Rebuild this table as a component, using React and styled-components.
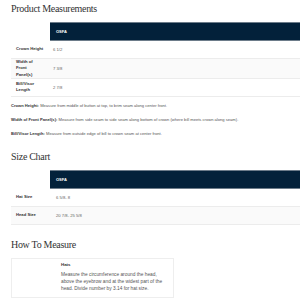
import React from 'react';
import styled, { createGlobalStyle } from 'styled-components';

const measurements = [
    { label: 'Crown Height', value: '6 1/2' },
    { label: 'Width of Front Panel(s)', value: '7 3/8' },
    { label: 'Bill/Visor Length', value: '2 7/8' },
];

const sizes = [
    { label: 'Hat Size', value: '6 5/8- 8' },
    { label: 'Head Size', value: '20 7/8- 25 5/8' },
];

const notes = [
    { term: 'Crown Height', text: 'Measure from middle of button at top, to brim seam along center front.' },
    { term: 'Width of Front Panel(s)', text: 'Measure from side seam to side seam along bottom of crown (where bill meets crown along seam).' },
    { term: 'Bill/Visor Length', text: 'Measure from outside edge of bill to crown seam at center front.' },
];

const App = () => {
    return (
        <>
            <GlobalStyle />
            <Page>
                <Heading>Product Measurements</Heading>
                <Table>
                    <thead>
                        <tr>
                            <BlankHeader />
                            <TableHeader>OSFA</TableHeader>
                        </tr>
                    </thead>
                    <tbody>
                        {measurements.map((row) => (
                            <TableRow key={row.label}>
                                <LabelCell>{row.label}</LabelCell>
                                <ValueCell>{row.value}</ValueCell>
                            </TableRow>
                        ))}
                    </tbody>
                </Table>

                <Notes>
                    {notes.map((note) => (
                        <Note key={note.term}>
                            <strong>{note.term}:</strong> {note.text}
                        </Note>
                    ))}
                </Notes>

                <Heading spaced>Size Chart</Heading>
                <Table>
                    <thead>
                        <tr>
                            <BlankHeader />
                            <TableHeader>OSFA</TableHeader>
                        </tr>
                    </thead>
                    <tbody>
                        {sizes.map((row) => (
                            <TableRow key={row.label}>
                                <LabelCell>{row.label}</LabelCell>
                                <ValueCell wide>{row.value}</ValueCell>
                            </TableRow>
                        ))}
                    </tbody>
                </Table>

                <Heading spaced>How To Measure</Heading>
                <MeasureBox>
                    <MeasureImage />
                    <MeasureText>
                        <MeasureTitle>Hats</MeasureTitle>
                        <MeasureBody>
                            Measure the circumference around the head, above the eyebrow and at the
                            widest part of the head. Divide number by 3.14 for hat size.
                        </MeasureBody>
                    </MeasureText>
                </MeasureBox>
            </Page>
        </>
    );
};

export default App;

const GlobalStyle = createGlobalStyle`
    html, body {
        margin: 0;
        padding: 0;
        background: #ffffff;
        overflow: hidden;
    }
    body {
        font-family: "Liberation Sans", Arial, sans-serif;
        color: #555;
    }
`;

const Page = styled.div`
    width: 300px;
    height: 300px;
    overflow: hidden;
    padding: 2px 0 0 11px;
    box-sizing: border-box;
`;

const Heading = styled.h2`
    margin: ${(props) => (props.spaced ? '13px' : '0')} 0 0;
    font-family: "Liberation Serif", "DejaVu Serif", serif;
    font-weight: 400;
    font-size: 10px;
    letter-spacing: -0.3px;
    line-height: 14px;
    color: #333;
`;

const Table = styled.table`
    width: 289px;
    margin-top: 6px;
    border-collapse: collapse;
    table-layout: fixed;
    font-size: 4.2px;
    text-align: left;
`;

const BlankHeader = styled.th`
    width: 39px;
    padding: 0;
    background: #fff;
`;

const TableHeader = styled.th`
    height: 17px;
    padding: 0 0 0 6px;
    background-color: #03213a;
    border-top: 1px solid #6d7c8a;
    border-bottom: 1px solid #6d7c8a;
    color: #fff;
    font-weight: 700;
    font-size: 4px;
`;

const TableRow = styled.tr`
    &:nth-child(even) {
        background-color: #fafafa;
    }
`;

const LabelCell = styled.td`
    height: 17px;
    padding: 0 6.2px 0 5px;
    border-bottom: 1px solid #ececec;
    color: #333;
    font-weight: 700;
    line-height: 6.3px;
`;

const ValueCell = styled.td`
    height: 17px;
    padding: 0 0 0 ${(props) => (props.wide ? '6px' : '3px')};
    border-bottom: 1px solid #ececec;
    color: #666;
`;

const Notes = styled.div`
    margin-top: 6px;
    display: flex;
    flex-direction: column;
    gap: 8px;
`;

const Note = styled.p`
    margin: 0;
    font-size: 4.1px;
    line-height: 6px;
    color: #555;

    strong {
        color: #333;
    }
`;

const MeasureBox = styled.div`
    margin-top: 6px;
    width: 163px;
    height: 40px;
    box-sizing: border-box;
    border: 1px solid #eeeeee;
    display: flex;
`;

const MeasureImage = styled.div`
    width: 49px;
    flex-shrink: 0;
`;

const MeasureText = styled.div`
    padding: 2.5px 6px 0 0;
`;

const MeasureTitle = styled.div`
    font-size: 4.4px;
    line-height: 7px;
    font-weight: 700;
    color: #333;
`;

const MeasureBody = styled.p`
    margin: 3px 0 0;
    font-size: 4.8px;
    line-height: 7px;
    color: #555;
`;
